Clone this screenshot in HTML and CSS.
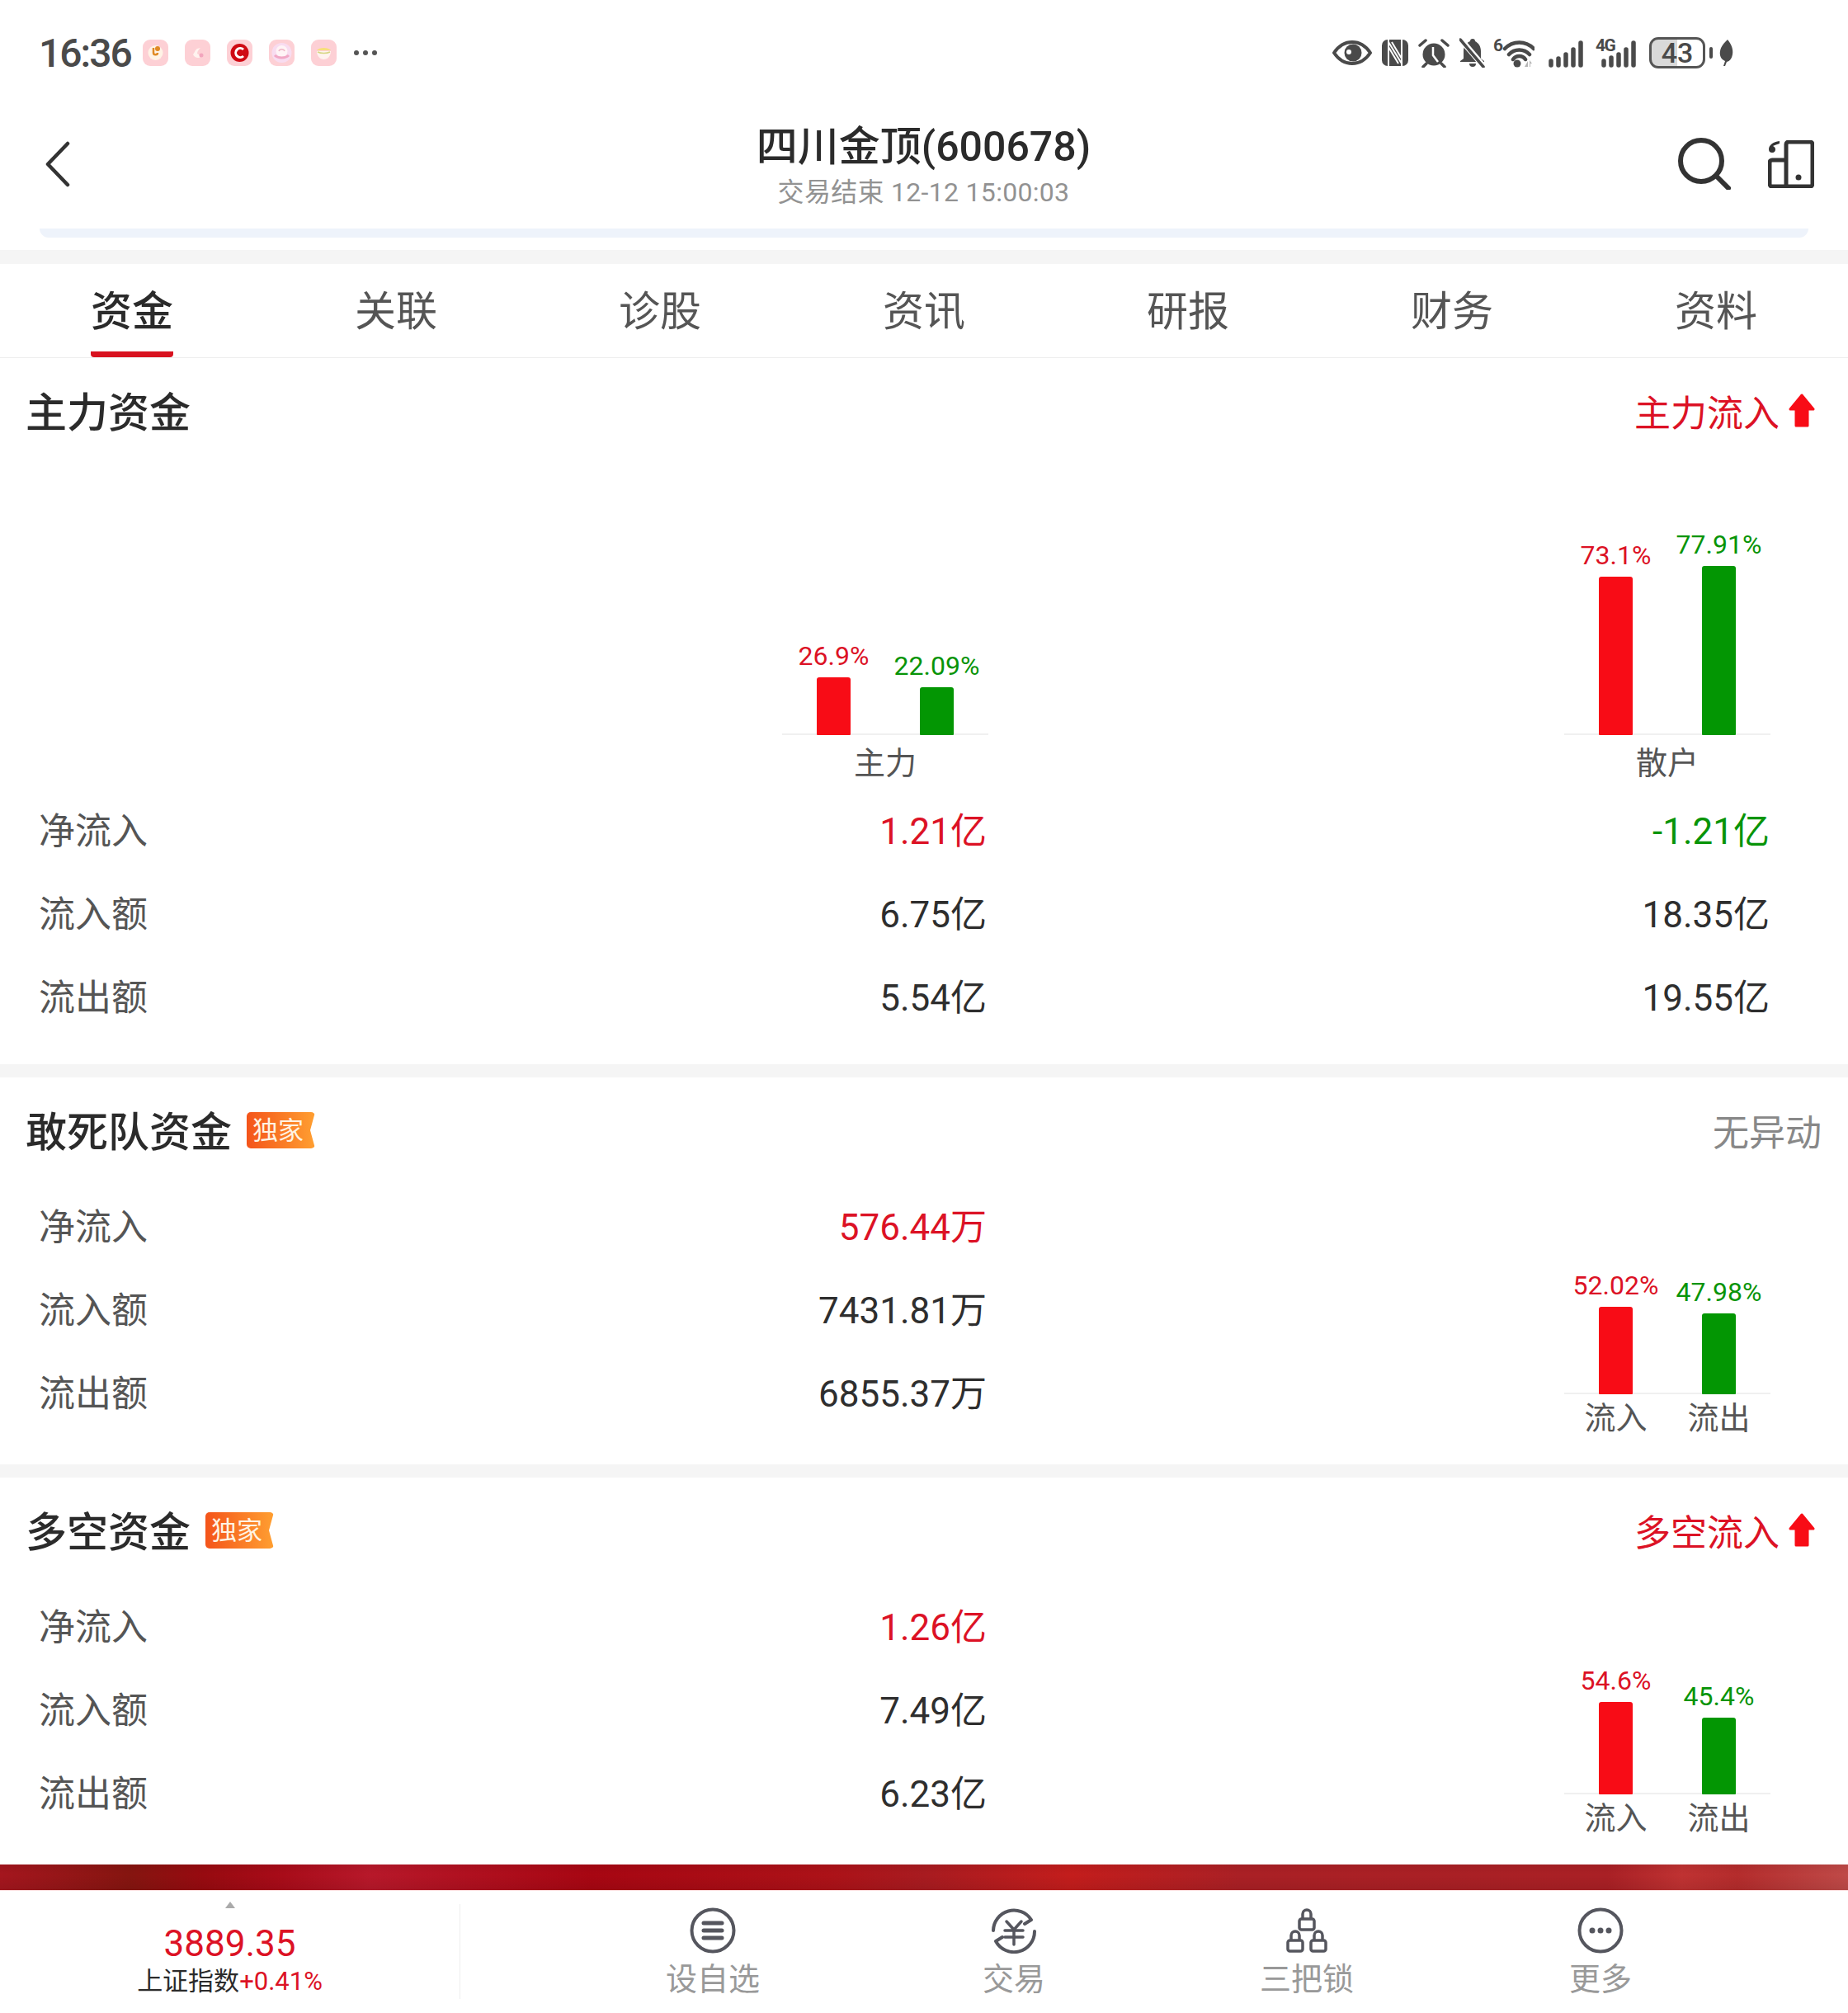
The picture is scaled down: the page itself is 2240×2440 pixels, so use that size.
FILE: index.html
```html
<!DOCTYPE html>
<html lang="zh-CN">
<head>
    <meta charset="UTF-8">
    <title>四川金顶(600678)</title>
    <link rel="stylesheet" href="styles.css">
</head>
<body>
    <div class="status-bar">
        <div class="status-left">
            <span class="clock">16:36</span>
            <svg class="app-icon" viewBox="0 0 31 32"><rect width="31" height="32" rx="9" fill="#fdd0d5"/><circle cx="15.500" cy="16" r="9" fill="#fff3e6"/><path d="M13 10v6c0 3 5 3 5 0" fill="none" stroke="#e08a24" stroke-width="2.500"/><circle cx="18" cy="11" r="3" fill="#e08a24"/></svg>
            <svg class="app-icon" viewBox="0 0 31 32"><rect width="31" height="32" rx="9" fill="#fdd0d5"/><path d="M10 18c2 5 8 5 10 2l-5-3c0-3 2-5 4-7l-4 1c-3 2-3 5-5 7z" fill="#fff3ef"/><circle cx="20" cy="19" r="2.500" fill="#f2a5bd"/></svg>
            <svg class="app-icon" viewBox="0 0 31 32"><rect width="31" height="32" rx="9" fill="#fdd0d5"/><circle cx="15.500" cy="16" r="11" fill="#cf0a14"/><path d="M20 12a5.500 5.500 0 1 0 0 8" fill="none" stroke="#fff" stroke-width="3"/></svg>
            <svg class="app-icon" viewBox="0 0 31 32"><rect width="31" height="32" rx="9" fill="#fdd0d5"/><circle cx="15.500" cy="16" r="12" fill="#f8dcf0"/><circle cx="15.500" cy="14" r="7" fill="#fff4f6"/><path d="M12 14c1-3 6-3 7 0" fill="none" stroke="#eeb8c8" stroke-width="1.500"/><path d="M7 19c4 4 13 4 17 0" fill="none" stroke="#f1a8c6" stroke-width="3"/></svg>
            <svg class="app-icon" viewBox="0 0 31 32"><rect width="31" height="32" rx="9" fill="#fdd0d5"/><path d="M7 13c3-4 14-4 17 0z" fill="#f7df7a"/><path d="M7 14h17c0 6-4 10-8.500 10S7 20 7 14z" fill="#fff3ef"/><path d="M8 15c4 2 11 2 15 0" fill="none" stroke="#d6d784" stroke-width="1.500"/></svg>
            <svg class="more-dots" viewBox="0 0 28 8"><circle cx="3" cy="4" r="3"/><circle cx="14" cy="4" r="3"/><circle cx="25" cy="4" r="3"/></svg>
        </div>
        <div class="status-right">
            <svg class="s-eye" viewBox="0 0 48 32"><path d="M2 16C8 7 15 3 24 3s16 4 22 13c-6 9-13 13-22 13S8 25 2 16z" fill="none" stroke="#4a4a4a" stroke-width="4" stroke-linejoin="round"/><circle cx="25" cy="16" r="10.500" fill="#4a4a4a"/><circle cx="20" cy="15" r="3" fill="#fff"/></svg>
            <svg class="s-nfc" viewBox="0 0 32 32"><rect width="32" height="32" rx="7" fill="#4a4a4a"/><path d="M8 0v32M8 3l16 26M12 3l12 20M24 0v32M8 9l12 20" fill="none" stroke="#fff" stroke-width="2"/></svg>
            <svg class="s-alarm" viewBox="0 0 38 36"><circle cx="19" cy="20" r="13.500" fill="#4a4a4a"/><path d="M18 11v10l6 8" fill="none" stroke="#fff" stroke-width="2.500"/><path d="M2 9l7-6M36 9l-7-6M10 31l-4 4M28 31l4 4" fill="none" stroke="#4a4a4a" stroke-width="3.500" stroke-linecap="round"/></svg>
            <svg class="s-bell" viewBox="0 0 31 36"><path d="M16 1c-2 0-3 1-3 3C8 6 5 10 5 16v9l-4 3v1h29v-1l-4-3v-9c0-6-3-10-7-12 0-2-1-3-3-3z" fill="#4a4a4a"/><path d="M12 31a4 4 0 0 0 8 0z" fill="#4a4a4a"/><path d="M1 1l28 33" stroke="#fff" stroke-width="7"/><path d="M1 2l28 33" stroke="#4a4a4a" stroke-width="3.500" stroke-linecap="round"/></svg>
            <svg class="s-wifi" viewBox="0 -12 50 60"><text class="wifi-six" x="0" y="16">6</text><path d="M14 13a24 24 0 0 1 35 0M19 20a17 17 0 0 1 25 0M24 26a9 9 0 0 1 15 0" fill="none" stroke="#4a4a4a" stroke-width="4.500" stroke-linecap="round"/><circle cx="29" cy="31" r="4.500" fill="#4a4a4a"/><path d="M38 35l4-7v7zM44 27l3 4h-2v4h-1z" fill="#b5b5b5"/></svg>
            <svg class="s-signal" viewBox="0 0 48 36"><path d="M6 33v-5M15 33v-8M24 33v-13M33 33v-19M42 33v-27" fill="none" stroke="#4a4a4a" stroke-width="5.500" stroke-linecap="round"/></svg>
            <svg class="s-signal-4g" viewBox="0 -12 53 60"><text class="signal-text" x="0" y="16">4G</text><path d="M10 33v-5M19 33v-9M28 33v-13M37 33v-19M46 33v-27" fill="none" stroke="#4a4a4a" stroke-width="5.500" stroke-linecap="round"/></svg>
            <div class="battery">43</div>
            <svg class="s-leaf" viewBox="0 0 29 32"><rect x="0" y="9" width="4" height="14" rx="2" fill="#4a4a4a"/><path d="M22 0c5 6 7 12 6 18-1 5-3 8-7 9l-2 5h-2l2-6c-5-2-7-7-6-12 1-6 5-10 9-14z" fill="#4a4a4a"/></svg>
        </div>
    </div>

    <div class="header">
        <svg class="back-icon" viewBox="0 0 32 56"><path d="M28 3L4 28l24 25" fill="none" stroke="#333" stroke-width="4.500" stroke-linecap="round" stroke-linejoin="round"/></svg>
        <div class="header-title">
            <h1>四川金顶(600678)</h1>
            <p>交易结束 12-12 15:00:03</p>
        </div>
        <div class="header-tools">
            <svg class="search-icon" viewBox="0 0 64 64"><circle cx="28" cy="29" r="25" fill="none" stroke="#333" stroke-width="6"/><path d="M47 48l14 14" stroke="#333" stroke-width="6" stroke-linecap="round"/></svg>
            <svg class="device-icon" viewBox="0 0 56 58"><path d="M22 5a3 3 0 0 1 3-3h26a3 3 0 0 1 3 3v48a3 3 0 0 1-3 3H5a3 3 0 0 1-3-3V27a3 3 0 0 1 3-3h17zM22 24v32" fill="none" stroke="#333" stroke-width="5" stroke-linejoin="round"/><circle cx="37" cy="45" r="3.500" fill="#333"/><path d="M14 1C6 2 1 6 1 11c0 3 2 4 4 4 3 0 4-2 4-4 0-2-1-3-3-4 2-1 5-2 8-3z" fill="#333"/></svg>
        </div>
    </div>
    <div class="header-strip"></div>
    <div class="gap gap-top"></div>

    <div class="tabs">
        <div class="tab active"><span>资金</span></div>
        <div class="tab"><span>关联</span></div>
        <div class="tab"><span>诊股</span></div>
        <div class="tab"><span>资讯</span></div>
        <div class="tab"><span>研报</span></div>
        <div class="tab"><span>财务</span></div>
        <div class="tab"><span>资料</span></div>
    </div>

    <!-- 主力资金 -->
    <div class="section section-main">
        <div class="section-head">
            <div class="section-title"><h2>主力资金</h2></div>
            <div class="head-note red">主力流入<svg class="up-arrow" viewBox="0 0 32 41"><path d="M16 2L30 19H23V39H9V19H2z" fill="#f80c16" stroke="#f80c16" stroke-width="3" stroke-linejoin="round"/></svg></div>
        </div>
        <div class="chart-row">
            <div class="chart">
                <div class="bars tall">
                    <div class="bar-col"><span class="pct red">26.9%</span><div class="bar bar-red" style="height: 70px"></div></div>
                    <div class="bar-col"><span class="pct green">22.09%</span><div class="bar bar-green" style="height: 58px"></div></div>
                </div>
                <div class="chart-label single">主力</div>
            </div>
            <div class="chart chart-second">
                <div class="bars tall">
                    <div class="bar-col"><span class="pct red">73.1%</span><div class="bar bar-red" style="height: 192px"></div></div>
                    <div class="bar-col"><span class="pct green">77.91%</span><div class="bar bar-green" style="height: 205px"></div></div>
                </div>
                <div class="chart-label single">散户</div>
            </div>
        </div>
        <div class="row row-wide"><span class="row-label">净流入</span><span class="red">1.21亿</span><span class="green">-1.21亿</span></div>
        <div class="row row-wide"><span class="row-label">流入额</span><span>6.75亿</span><span>18.35亿</span></div>
        <div class="row row-wide"><span class="row-label">流出额</span><span>5.54亿</span><span>19.55亿</span></div>
    </div>
    <div class="gap"></div>

    <!-- 敢死队资金 -->
    <div class="section">
        <div class="section-head">
            <div class="section-title"><h2>敢死队资金</h2><span class="badge">独家</span></div>
            <div class="head-note muted">无异动</div>
        </div>
        <div class="section-body">
            <div class="rows">
                <div class="row"><span class="row-label">净流入</span><span class="red">576.44万</span></div>
                <div class="row"><span class="row-label">流入额</span><span>7431.81万</span></div>
                <div class="row"><span class="row-label">流出额</span><span>6855.37万</span></div>
            </div>
            <div class="chart chart-side">
                <div class="bars">
                    <div class="bar-col"><span class="pct red">52.02%</span><div class="bar bar-red" style="height: 106px"></div></div>
                    <div class="bar-col"><span class="pct green">47.98%</span><div class="bar bar-green" style="height: 98px"></div></div>
                </div>
                <div class="chart-label"><span>流入</span><span>流出</span></div>
            </div>
        </div>
    </div>
    <div class="gap"></div>

    <!-- 多空资金 -->
    <div class="section">
        <div class="section-head">
            <div class="section-title"><h2>多空资金</h2><span class="badge">独家</span></div>
            <div class="head-note red">多空流入<svg class="up-arrow" viewBox="0 0 32 41"><path d="M16 2L30 19H23V39H9V19H2z" fill="#f80c16" stroke="#f80c16" stroke-width="3" stroke-linejoin="round"/></svg></div>
        </div>
        <div class="section-body">
            <div class="rows">
                <div class="row"><span class="row-label">净流入</span><span class="red">1.26亿</span></div>
                <div class="row"><span class="row-label">流入额</span><span>7.49亿</span></div>
                <div class="row"><span class="row-label">流出额</span><span>6.23亿</span></div>
            </div>
            <div class="chart chart-side">
                <div class="bars">
                    <div class="bar-col"><span class="pct red">54.6%</span><div class="bar bar-red" style="height: 112px"></div></div>
                    <div class="bar-col"><span class="pct green">45.4%</span><div class="bar bar-green" style="height: 93px"></div></div>
                </div>
                <div class="chart-label"><span>流入</span><span>流出</span></div>
            </div>
        </div>
    </div>

    <div class="promo-banner"></div>

    <div class="bottom-bar">
        <div class="index-box">
            <div class="index-arrow"></div>
            <div class="index-value">3889.35</div>
            <div class="index-name">上证指数<span class="red">+0.41%</span></div>
        </div>
        <div class="bottom-divider"></div>
        <div class="bottom-nav">
            <div class="nav-item">
                <svg viewBox="0 0 56 56"><circle cx="28" cy="28" r="25.500" fill="none" stroke="#55565e" stroke-width="4"/><path d="M17 19h22M17 28h22M17 37h22" stroke="#55565e" stroke-width="5" stroke-linecap="round"/></svg>
                <span>设自选</span>
            </div>
            <div class="nav-item">
                <svg viewBox="0 0 56 56"><path d="M3 28A25 25 0 0 1 49 15L41 20M53 29A25 25 0 0 1 6 41L14 36" fill="none" stroke="#55565e" stroke-width="4" stroke-linecap="round" stroke-linejoin="round"/><path d="M19 17l9 10 9-10M17 28h22M17 36h22M28 27v18" fill="none" stroke="#55565e" stroke-width="3.500" stroke-linecap="round" stroke-linejoin="round"/></svg>
                <span>交易</span>
            </div>
            <div class="nav-item">
                <svg viewBox="0 0 56 56"><g fill="none" stroke="#55565e" stroke-width="3.500" stroke-linejoin="round"><rect x="19" y="14" width="18" height="13" rx="2.500"/><path d="M23 14V8a5 5 0 0 1 10 0v6"/><rect x="5" y="40" width="18" height="13" rx="2.500"/><path d="M9 40v-6a5 5 0 0 1 10 0v6"/><rect x="33" y="40" width="18" height="13" rx="2.500"/><path d="M37 40v-6a5 5 0 0 1 10 0v6"/></g></svg>
                <span>三把锁</span>
            </div>
            <div class="nav-item">
                <svg viewBox="0 0 56 56"><circle cx="28" cy="28" r="25.500" fill="none" stroke="#55565e" stroke-width="4"/><circle cx="18" cy="28" r="3.500" fill="#55565e"/><circle cx="28" cy="28" r="3.500" fill="#55565e"/><circle cx="38" cy="28" r="3.500" fill="#55565e"/></svg>
                <span>更多</span>
            </div>
        </div>
    </div>
</body>
</html>
```

FILE: styles.css
```css
body {
    font-family: Roboto, "Noto Sans CJK SC", sans-serif;
    margin: 0;
    width: 2240px;
    height: 2440px;
    overflow: hidden;
    background-color: #fff;
    color: #2e2e2e;
}

.red {
    color: #dc1225;
}

.green {
    color: #089408;
}

.muted {
    color: #888;
}

.gap {
    height: 16px;
    background-color: #f5f5f5;
}

.gap-top {
    height: 17px;
    margin-top: 15px;
}

/* status bar */
.status-bar {
    height: 128px;
    display: flex;
    justify-content: space-between;
    align-items: center;
    padding: 0 139px 0 47px;
    box-sizing: border-box;
}

.status-left {
    display: flex;
    align-items: center;
    gap: 20px;
}

.clock {
    font-size: 48px;
    font-weight: 500;
    color: #4a4a4a;
    width: 110px;
    margin-right: -4px;
    letter-spacing: -2px;
}

.app-icon {
    width: 31px;
    height: 32px;
}

.more-dots {
    width: 28px;
    height: 8px;
    margin-left: 1px;
    fill: #555;
}

.status-right {
    display: flex;
    align-items: center;
    gap: 12px;
}

.s-eye { width: 48px; height: 32px; }
.s-nfc { width: 32px; height: 32px; }
.s-alarm { width: 38px; height: 36px; }
.s-bell { width: 31px; height: 36px; }
.s-wifi { width: 50px; height: 60px; margin-left: -2px; margin-right: 2px; }
.s-signal { width: 48px; height: 36px; }
.s-signal-4g { width: 53px; height: 60px; }

.wifi-six,
.signal-text {
    font-size: 21px;
    font-weight: 700;
    fill: #4a4a4a;
}

.signal-text {
    letter-spacing: -1.500px;
}

.battery {
    width: 68px;
    height: 38px;
    box-sizing: border-box;
    border: 3px solid #555;
    border-radius: 11px;
    background: linear-gradient(90deg, #d9d9d9 50%, #fff 50%);
    color: #4a4a4a;
    font-size: 34px;
    font-weight: 500;
    line-height: 32px;
    text-align: center;
}

.s-leaf {
    width: 29px;
    height: 32px;
    margin-left: -7px;
}

/* header */
.header {
    height: 149px;
    display: grid;
    grid-template-columns: 1fr auto 1fr;
    padding: 0 41px 0 40px;
    box-sizing: border-box;
}

.back-icon {
    width: 32px;
    height: 56px;
    margin: 43px 0 0 14px;
}

.header-title {
    text-align: center;
    padding-top: 20px;
}

.header-title h1 {
    margin: 0;
    font-size: 50px;
    font-weight: 500;
    line-height: 60px;
    color: #2b2b2b;
}

.header-title p {
    margin: 5px 0 0;
    font-size: 32px;
    line-height: 40px;
    letter-spacing: 0.300px;
    color: #929292;
}

.header-tools {
    display: flex;
    justify-content: flex-end;
    gap: 45px;
    padding-top: 38px;
}

.search-icon {
    width: 64px;
    height: 64px;
}

.device-icon {
    width: 56px;
    height: 58px;
    margin-top: 4px;
}

.header-strip {
    height: 11px;
    margin: 0 48px;
    background-color: #eef3fb;
    border-radius: 0 0 26px 26px;
}

/* tabs */
.tabs {
    display: grid;
    grid-template-columns: repeat(7, 320px);
    border-bottom: 1px solid #eee;
}

.tab {
    text-align: center;
    font-size: 50px;
    color: #555;
}

.tab span {
    display: inline-block;
    box-sizing: border-box;
    height: 113px;
    line-height: 116px;
}

.tab.active {
    color: #2b2b2b;
    font-weight: 500;
}

.tab.active span {
    border-bottom: 7px solid #d8121f;
    border-radius: 0 0 4px 4px;
}

/* sections */
.section {
    height: 469px;
}

.section-main {
    height: 856px;
}

.section-head {
    height: 130px;
    display: flex;
    justify-content: space-between;
    align-items: center;
    padding: 0 32px 0 31px;
}

.section-title {
    display: flex;
    align-items: center;
}

.section-title h2 {
    margin: 0 0 6px;
    font-size: 50px;
    font-weight: 500;
    color: #2b2b2b;
}

.badge {
    position: relative;
    width: 83px;
    height: 44px;
    margin-left: 18px;
    margin-bottom: 2px;
    box-sizing: border-box;
    padding-left: 7px;
    border-radius: 5px;
    background: linear-gradient(90deg, #f4541a, #ff9f31);
    color: #fff3e3;
    font-size: 31px;
    line-height: 46px;
}

.badge::after {
    content: "";
    position: absolute;
    top: 0;
    right: 0;
    border-top: 22px solid transparent;
    border-bottom: 22px solid transparent;
    border-right: 6px solid #fff;
}

.head-note {
    display: flex;
    align-items: center;
    font-size: 44px;
    margin-bottom: 3px;
}

.up-arrow {
    width: 32px;
    height: 41px;
    margin: 0 8px 0 11px;
}

/* charts */
.chart-row {
    display: flex;
    height: 392px;
    padding-left: 948px;
}

.chart {
    width: 250px;
}

.chart-second {
    margin-left: 698px;
}

.chart-side {
    margin-left: 700px;
}

.bars {
    display: flex;
    align-items: flex-end;
    box-shadow: inset 0 -2px 0 #f0f0f0;
}

.bars.tall {
    height: 327px;
}

.bar-col {
    width: 125px;
    display: flex;
    flex-direction: column;
    align-items: center;
}

.pct {
    font-size: 32px;
    line-height: 40px;
    margin-bottom: 6px;
    white-space: nowrap;
}

.bar {
    width: 41px;
    border-radius: 3px 3px 1px 1px;
}

.bar-red {
    background-color: #f80c16;
}

.bar-green {
    background-color: #039603;
}

.chart-label {
    display: grid;
    grid-template-columns: 125px 125px;
    margin: 7px 0 -2px;
    font-size: 38px;
    line-height: 44px;
    color: #555;
    text-align: center;
}

.chart-label.single {
    display: block;
    margin: 12px 0 0;
}

/* rows */
.section-body {
    display: flex;
    align-items: flex-end;
}

.rows {
    width: 1196px;
    flex: none;
}

.row {
    display: grid;
    grid-template-columns: 300px 849px;
    padding-left: 47px;
    height: 101px;
    line-height: 104px;
    font-size: 44px;
    text-align: right;
}

.row-wide {
    grid-template-columns: 300px 849px 949px;
}

.row-label {
    text-align: left;
    color: #555;
}

/* bottom */
.promo-banner {
    height: 31px;
    border-bottom: 1px solid #fde3e3;
    background: linear-gradient(180deg, rgba(0, 0, 0, 0.06), rgba(0, 0, 0, 0) 40%, rgba(0, 0, 0, 0.08)),
        linear-gradient(90deg, #a5161e 0, #861510 7%, #980a10 11%, #a80b18 15%, #b8182a 20%, #a80612 32%, #ad1218 45%, #a91b20 50%, #c41d1c 58%, #ab2025 67%, #aa2025 87%, #c03232 91%, #b52c2c 94%, #c04a48 100%);
}

.bottom-bar {
    display: flex;
    height: 148px;
}

.index-box {
    width: 557px;
    display: flex;
    flex-direction: column;
    align-items: center;
    padding-top: 13px;
    box-sizing: border-box;
}

.index-arrow {
    border-left: 6px solid transparent;
    border-right: 6px solid transparent;
    border-bottom: 8px solid #aaa;
}

.index-value {
    margin-top: 20px;
    font-size: 44px;
    line-height: 46px;
    color: #dc1225;
}

.index-name {
    margin-top: 3px;
    font-size: 31px;
    line-height: 40px;
    color: #2b2b2b;
}

.bottom-divider {
    width: 1px;
    height: 115px;
    margin-top: 16px;
    background-color: #eee;
}

.bottom-nav {
    display: grid;
    grid-template-columns: 358px 372px 338px 374px;
    margin-left: 127px;
    padding-top: 20px;
}

.nav-item {
    display: flex;
    flex-direction: column;
    align-items: center;
    font-size: 38px;
    line-height: 44px;
    color: #999;
}

.nav-item svg {
    width: 56px;
    height: 56px;
    margin-bottom: 9px;
}
```
